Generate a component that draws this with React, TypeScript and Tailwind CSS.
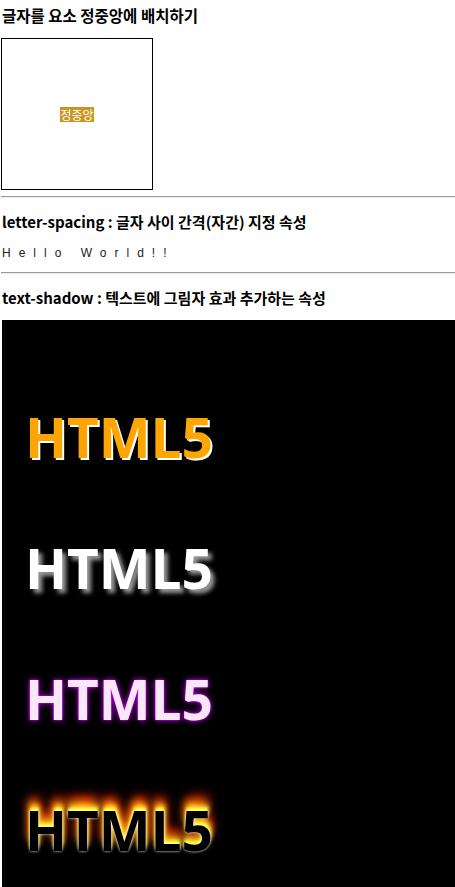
import React from "react";

const ko = { fontFamily: '"Noto Sans CJK KR", "Noto Sans", sans-serif' };

export default function App() {
  return (
    <div className="bg-white min-h-[887px] pl-px overflow-hidden" style={ko}>
      <div className="h-[30px] leading-[30px] text-[15.5px] font-bold text-black whitespace-nowrap pl-px">
        글자를 요소 정중앙에 배치하기
      </div>
      <div className="mt-[8px] w-[152px] h-[152px] border border-black flex items-center justify-center">
        <span className="bg-[#c8961e] text-white text-[12px] leading-[15px]">정중앙</span>
      </div>
      <div className="mt-[6px] border-t border-b border-t-[#9a9a9a] border-b-[#eeeeee]" />
      <div className="mt-[12px] h-[24px] leading-[24px] text-[15px] font-bold text-black whitespace-nowrap pl-px">
        letter-spacing : 글자 사이 간격(자간) 지정 속성
      </div>
      <div
        className="mt-[11px] h-[16px] leading-[16px] text-[12px] text-[#222] tracking-[8px] whitespace-nowrap pl-px"
        style={{ fontFamily: '"Liberation Sans", sans-serif' }}
      >
        Hello World!!
      </div>
      <div className="mt-[11px] border-t border-b border-t-[#9a9a9a] border-b-[#eeeeee]" />
      <div className="mt-[12px] h-[24px] leading-[24px] text-[15px] font-bold text-black whitespace-nowrap pl-px">
        text-shadow : 텍스트에 그림자 효과 추가하는 속성
      </div>
      <div
        className="mt-[10px] ml-px bg-black pt-[89px] pb-[80px] pl-[23px] flex flex-col gap-[75px] font-bold text-[55px] leading-[56px] whitespace-nowrap"
        style={{ fontFamily: '"Noto Sans", sans-serif' }}
      >
        <div className="text-[#ffa500] [text-shadow:2px_2px_0_#ffffff]">HTML5</div>
        <div className="text-white [text-shadow:4px_4px_4px_#999999]">HTML5</div>
        <div className="text-[#f9e6f8] [text-shadow:0_0_3px_#d000ff,0_0_6px_#9000b0]">HTML5</div>
        <div className="text-black [text-shadow:0_0_3px_#ffffff,0_-3px_3px_#ffff33,1px_-6px_5px_#ffdd33,-1px_-10px_8px_#ff8800,1px_-14px_12px_#ff2200]">
          HTML5
        </div>
      </div>
    </div>
  );
}
